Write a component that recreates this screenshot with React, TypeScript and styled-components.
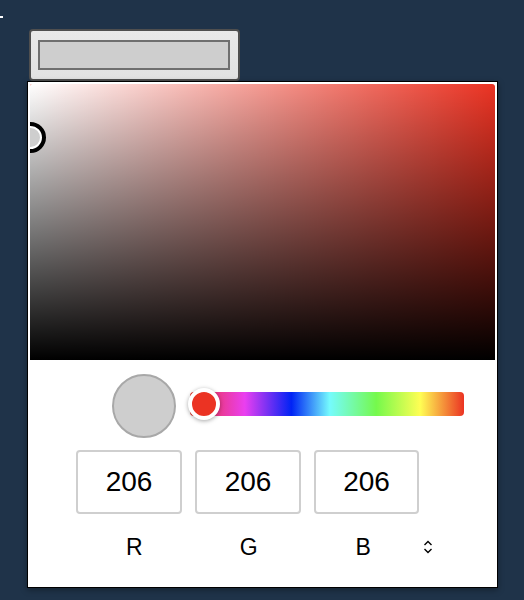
import React from "react";
import styled, { createGlobalStyle } from "styled-components";

const Global = createGlobalStyle`
  html, body {
    margin: 0;
    padding: 0;
    background: #1f3349;
    font-family: "Liberation Sans", Arial, sans-serif;
  }
`;

const Page = styled.div`
  width: 524px;
  height: 600px;
  padding-top: 16px;
  box-sizing: border-box;
  background: #1f3349;
  overflow: hidden;
`;

const Mark = styled.div`
  width: 3px;
  height: 2px;
  background: #ffffff;
`;

const Content = styled.div`
  margin: 11px 0 0 27px;
  display: flex;
  flex-direction: column;
  align-items: flex-start;
`;

const TriggerButton = styled.button`
  margin-left: 2px;
  width: 211px;
  height: 52px;
  box-sizing: border-box;
  padding: 9px 8px 9px 7px;
  border: 2px solid #4f4f4f;
  border-radius: 4px;
  background: linear-gradient(#e9e9e9, #e1e1e1);
  display: flex;
  cursor: pointer;
`;

const TriggerSwatch = styled.span<{ $color: string }>`
  display: block;
  width: 192px;
  height: 30px;
  box-sizing: border-box;
  border: 2px solid #6f6f6f;
  background: ${(p) => p.$color};
`;

const Popup = styled.div`
  width: 471px;
  height: 507px;
  box-sizing: border-box;
  border: 1px solid #000;
  background: #fff;
  box-shadow: 0 2px 6px rgba(0, 0, 0, 0.35);
  display: flex;
  flex-direction: column;
`;

const Saturation = styled.div<{ $hue: string }>`
  position: relative;
  margin: 2px 2px 0 2px;
  width: 465px;
  height: 276px;
  border-radius: 2px 3px 0 0;
  overflow: hidden;
  background: ${(p) => p.$hue};
`;

const WhiteLayer = styled.div`
  position: absolute;
  inset: 0;
  background: linear-gradient(to right, #fff, rgba(255, 255, 255, 0));
`;

const BlackLayer = styled.div`
  position: absolute;
  inset: 0;
  background: linear-gradient(to top, #000, rgba(0, 0, 0, 0));
`;

const SatPointer = styled.div<{ $color: string }>`
  position: absolute;
  width: 31px;
  height: 31px;
  box-sizing: border-box;
  border-radius: 50%;
  border: 4px solid #000;
  box-shadow: inset 0 0 0 2px #fff;
  background: ${(p) => p.$color};
`;

const Body = styled.div`
  padding: 14px 0 0 84px;
  display: flex;
  flex-direction: column;
`;

const HueRow = styled.div`
  display: flex;
  align-items: center;
  gap: 14px;
`;

const Swatch = styled.div<{ $color: string }>`
  width: 64px;
  height: 64px;
  box-sizing: border-box;
  border-radius: 50%;
  border: 2px solid #a8a8a8;
  background: ${(p) => p.$color};
`;

const HueTrack = styled.div`
  position: relative;
  width: 274px;
  height: 24px;
  margin-bottom: 4px;
  border-radius: 4px;
  background: linear-gradient(
    to right,
    #eb3323 0%,
    #ea3ff0 20%,
    #0023f5 37%,
    #75fbfd 51%,
    #75f94c 68%,
    #fffe54 84%,
    #eb3323 100%
  );
`;

const HuePointer = styled.div`
  position: absolute;
  top: -4px;
  left: -2px;
  width: 32px;
  height: 32px;
  box-sizing: border-box;
  border-radius: 50%;
  border: 4px solid #fff;
  background: #eb3323;
  box-shadow: 0 1px 4px rgba(0, 0, 0, 0.35);
`;

const Fields = styled.div`
  margin: 12px 0 0 -36px;
  display: grid;
  grid-template-columns: 106px 106px 105px;
  column-gap: 13px;
`;

const FieldInput = styled.input`
  width: 100%;
  height: 64px;
  box-sizing: border-box;
  border: 2px solid #cfcfcf;
  border-radius: 4px;
  text-align: center;
  font-family: "Liberation Sans", Arial, sans-serif;
  font-size: 28px;
  color: #000;
  background: #fff;
  outline: none;
  padding: 0;
`;

const Labels = styled.div`
  margin: 20px 0 0 -35px;
  display: flex;
  align-items: center;
`;

const Label = styled.div`
  width: 114.5px;
  text-align: center;
  font-size: 23px;
  line-height: 26px;
  color: #000;
`;

const Toggle = styled.div`
  margin-left: 2px;
  width: 10px;
  height: 16px;
  display: flex;
`;

const SAT_COLOR = "#cecece";

export default function App() {
  return (
    <>
      <Global />
      <Page>
        <Mark />
        <Content>
          <TriggerButton>
            <TriggerSwatch $color={SAT_COLOR} />
          </TriggerButton>
          <Popup>
            <Saturation $hue="#eb3323">
              <WhiteLayer />
              <BlackLayer />
              <SatPointer $color={SAT_COLOR} style={{ left: -15, top: 38 }} />
            </Saturation>
            <Body>
              <HueRow>
                <Swatch $color={SAT_COLOR} />
                <HueTrack>
                  <HuePointer />
                </HueTrack>
              </HueRow>
              <Fields>
                <FieldInput defaultValue="206" />
                <FieldInput defaultValue="206" />
                <FieldInput defaultValue="206" />
              </Fields>
              <Labels>
                <Label>R</Label>
                <Label>G</Label>
                <Label>B</Label>
                <Toggle>
                  <svg width="10" height="16" viewBox="0 0 10 16" fill="none">
                    <path d="M1.5 6 L5 2.5 L8.5 6" stroke="#000" strokeWidth="1.4" />
                    <path d="M1.5 10 L5 13.5 L8.5 10" stroke="#000" strokeWidth="1.4" />
                  </svg>
                </Toggle>
              </Labels>
            </Body>
          </Popup>
        </Content>
      </Page>
    </>
  );
}
